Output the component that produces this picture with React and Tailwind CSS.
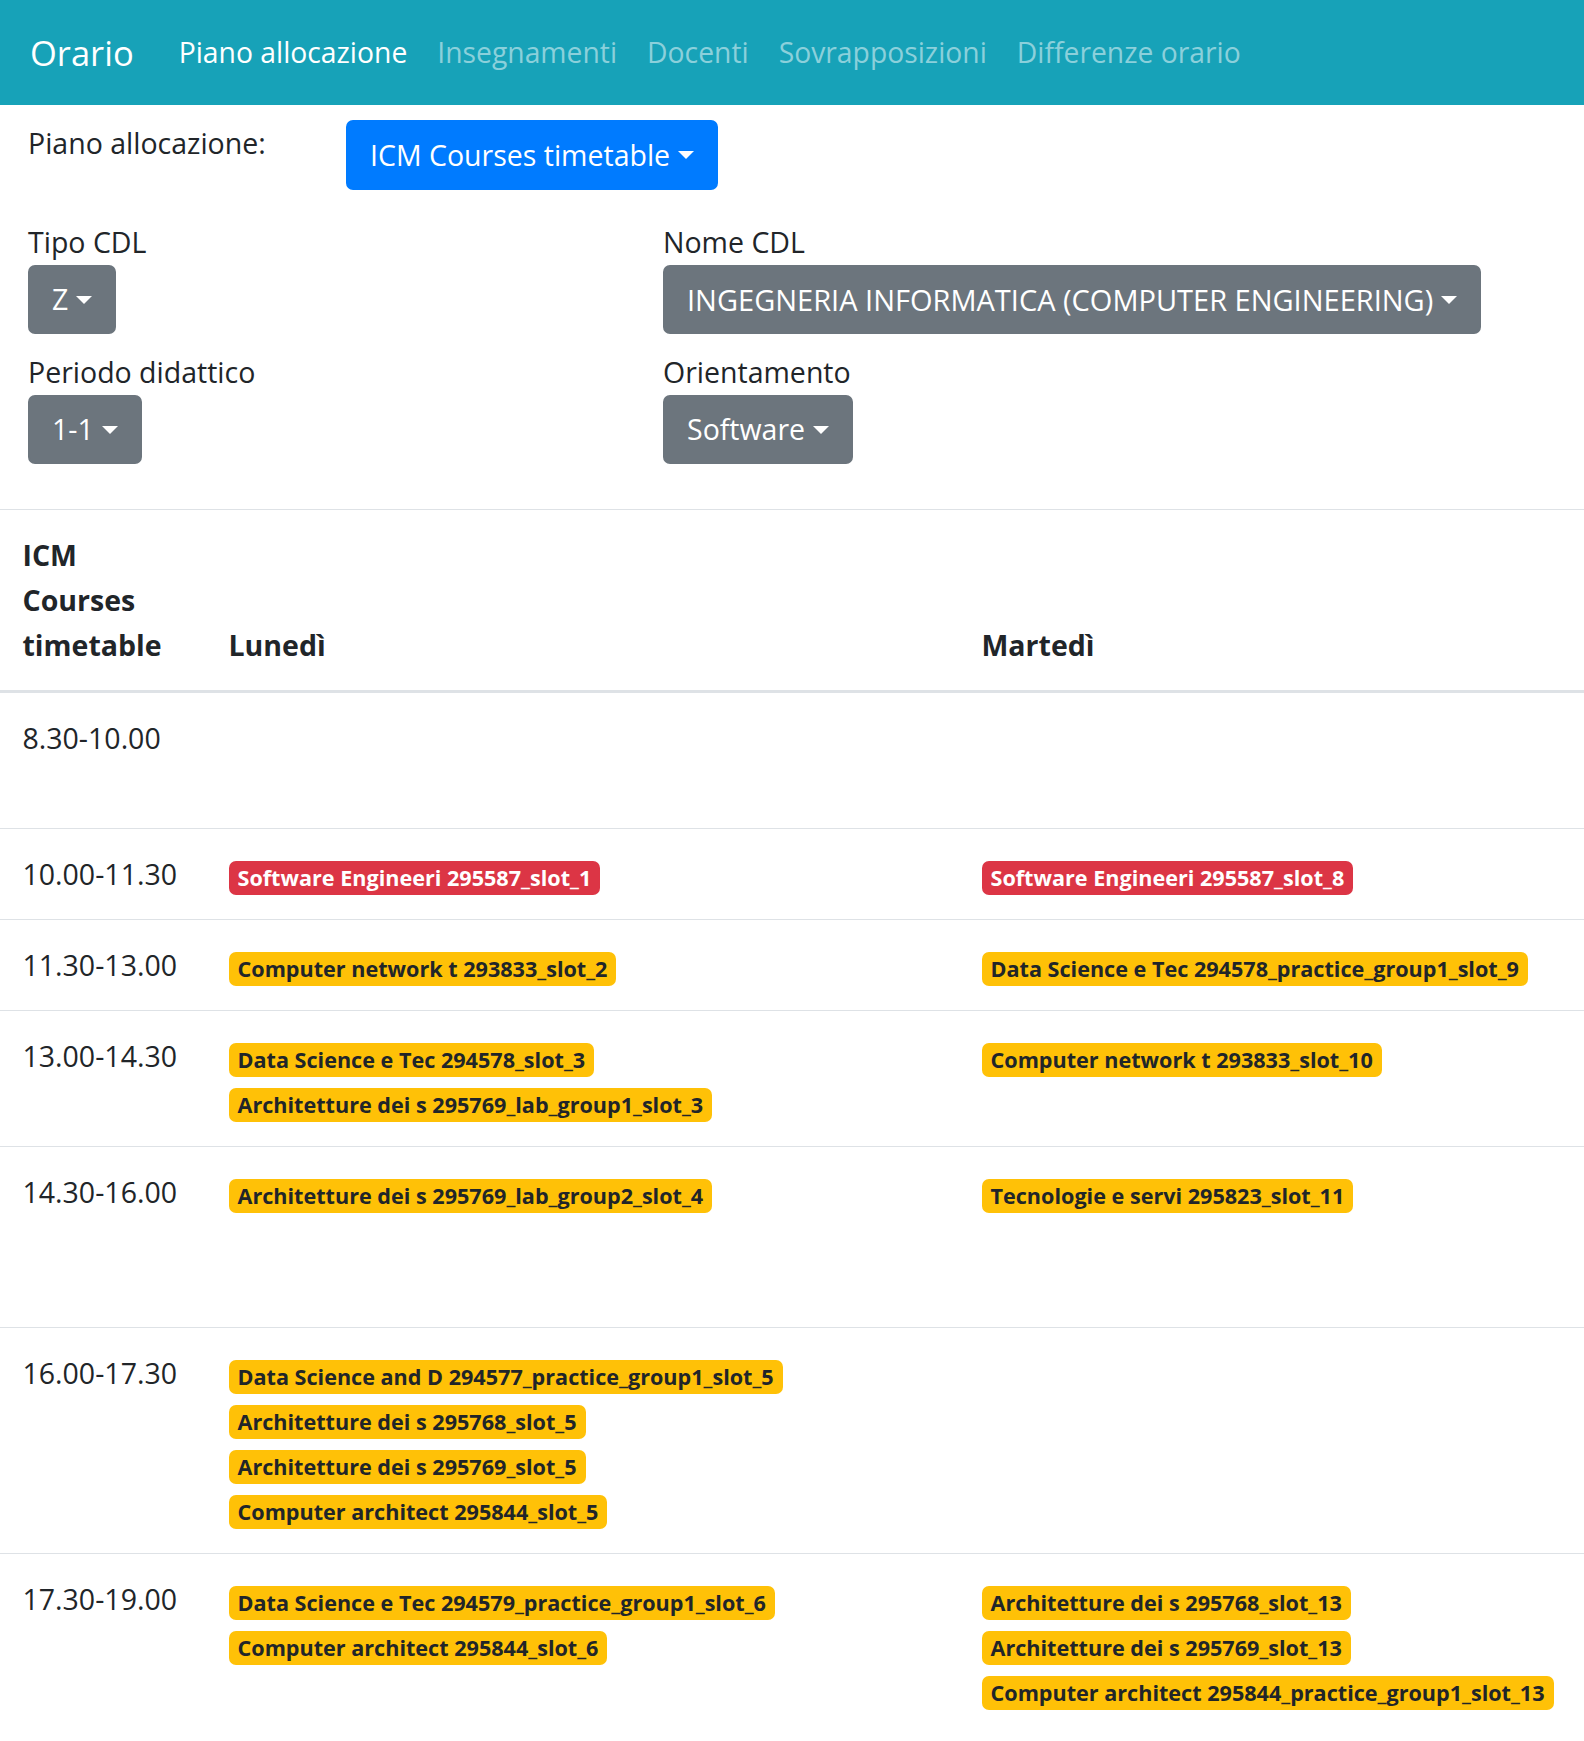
import React from "react";

const FONT = { fontFamily: '"Open Sans", "Noto Sans", Arial, sans-serif' };

function Caret() {
  return (
    <span className="inline-block ml-[8px] w-0 h-0 border-t-[8px] border-x-[8px] border-x-transparent border-t-white align-[6px]" />
  );
}

function DropBtn({ children, primary, wide }) {
  return (
    <button
      className={
        (primary ? "bg-[#007bff] border-[#007bff] h-[70px]" : "bg-[#6c757d] border-[#6c757d] h-[69px]") +
        (wide ? " text-[29px]" : " text-[28.5px]") +
        " inline-flex items-center whitespace-nowrap rounded-[7px] border-2 px-[22px] leading-[45px] text-white"
      }
    >
      <span>{children}</span>
      <Caret />
    </button>
  );
}

function Badge({ text, red }) {
  return (
    <div className="flex h-[45px] items-start pt-[9px]">
      <span
        className={
          (red ? "bg-[#dc3545] text-white" : "bg-[#ffc107] text-[#212529]") +
          " inline-block h-[34px] whitespace-nowrap rounded-[7px] px-[9px] text-[21.6px] font-bold leading-[34px]"
        }
      >
        {text}
      </span>
    </div>
  );
}

const MINH = {
  1: "min-h-[45px]",
  2: "min-h-[90px]",
  3: "min-h-[135px]",
  4: "min-h-[180px]",
};

const rows = [
  { time: "8.30-10.00", lines: 2, mon: [], tue: [] },
  {
    time: "10.00-11.30",
    lines: 1,
    mon: [{ t: "Software Engineeri 295587_slot_1", red: true }],
    tue: [{ t: "Software Engineeri 295587_slot_8", red: true }],
  },
  {
    time: "11.30-13.00",
    lines: 1,
    mon: [{ t: "Computer network t 293833_slot_2" }],
    tue: [{ t: "Data Science e Tec 294578_practice_group1_slot_9" }],
  },
  {
    time: "13.00-14.30",
    lines: 2,
    mon: [
      { t: "Data Science e Tec 294578_slot_3" },
      { t: "Architetture dei s 295769_lab_group1_slot_3" },
    ],
    tue: [{ t: "Computer network t 293833_slot_10" }],
  },
  {
    time: "14.30-16.00",
    lines: 3,
    mon: [{ t: "Architetture dei s 295769_lab_group2_slot_4" }],
    tue: [{ t: "Tecnologie e servi 295823_slot_11" }],
  },
  {
    time: "16.00-17.30",
    lines: 4,
    mon: [
      { t: "Data Science and D 294577_practice_group1_slot_5" },
      { t: "Architetture dei s 295768_slot_5" },
      { t: "Architetture dei s 295769_slot_5" },
      { t: "Computer architect 295844_slot_5" },
    ],
    tue: [],
  },
  {
    time: "17.30-19.00",
    lines: 3,
    mon: [
      { t: "Data Science e Tec 294579_practice_group1_slot_6" },
      { t: "Computer architect 295844_slot_6" },
    ],
    tue: [
      { t: "Architetture dei s 295768_slot_13" },
      { t: "Architetture dei s 295769_slot_13" },
      { t: "Computer architect 295844_practice_group1_slot_13" },
    ],
  },
];

export default function App() {
  return (
    <div className="min-h-screen w-full overflow-hidden bg-white text-[#212529]" style={FONT}>
      <nav className="flex h-[105px] items-center bg-[#17a2b8] px-[30px]">
        <span className="mr-[30px] text-[34.5px] leading-[52px] text-white">Orario</span>
        <span className="px-[15px] text-[28.3px] leading-[45px] text-white">Piano allocazione</span>
        <span className="px-[15px] text-[28.3px] leading-[45px] text-[#8bd0db]">Insegnamenti</span>
        <span className="px-[15px] text-[28.3px] leading-[45px] text-[#8bd0db]">Docenti</span>
        <span className="px-[15px] text-[28.3px] leading-[45px] text-[#8bd0db]">Sovrapposizioni</span>
        <span className="px-[15px] text-[28.3px] leading-[45px] text-[#8bd0db]">Differenze orario</span>
      </nav>

      <div className="px-[28px] pt-[15px]">
        <div className="flex items-start">
          <div className="w-[318px] text-[28.5px] leading-[46px]">Piano allocazione:</div>
          <DropBtn primary>ICM Courses timetable</DropBtn>
        </div>

        <div className="mt-[29px] grid grid-cols-[635px_1fr]">
          <div className="flex flex-col items-start">
            <div className="text-[28.5px] leading-[46px]">Tipo CDL</div>
            <DropBtn>Z</DropBtn>
            <div className="mt-[15px] text-[28.5px] leading-[46px]">Periodo didattico</div>
            <DropBtn>1-1</DropBtn>
          </div>
          <div className="flex flex-col items-start">
            <div className="text-[28.5px] leading-[46px]">Nome CDL</div>
            <DropBtn wide>INGEGNERIA INFORMATICA (COMPUTER ENGINEERING)</DropBtn>
            <div className="mt-[15px] text-[28.5px] leading-[46px]">Orientamento</div>
            <DropBtn>Software</DropBtn>
          </div>
        </div>
      </div>

      <table className="mt-[45px] w-full table-fixed border-collapse">
        <colgroup>
          <col className="w-[206px]" />
          <col className="w-[753px]" />
          <col />
        </colgroup>
        <thead>
          <tr>
            <th className="border-t border-b-[3px] border-[#dee2e6] p-[22.5px] text-left align-bottom text-[28.5px] font-bold leading-[45px]">
              <div>ICM</div>
              <div>Courses</div>
              <div>timetable</div>
            </th>
            <th className="border-t border-b-[3px] border-[#dee2e6] p-[22.5px] text-left align-bottom text-[28.5px] font-bold leading-[45px]">
              Lunedì
            </th>
            <th className="border-t border-b-[3px] border-[#dee2e6] p-[22.5px] text-left align-bottom text-[28.5px] font-bold leading-[45px]">
              Martedì
            </th>
          </tr>
        </thead>
        <tbody>
          {rows.map((r) => (
            <tr key={r.time}>
              <td className="border-t border-[#dee2e6] p-[22.5px] align-top">
                <div className={MINH[r.lines] + " whitespace-nowrap text-[28.5px] leading-[45px]"}>{r.time}</div>
              </td>
              <td className="border-t border-[#dee2e6] p-[22.5px] align-top">
                {r.mon.map((b) => (
                  <Badge key={b.t} text={b.t} red={b.red} />
                ))}
              </td>
              <td className="border-t border-[#dee2e6] p-[22.5px] align-top">
                {r.tue.map((b) => (
                  <Badge key={b.t} text={b.t} red={b.red} />
                ))}
              </td>
            </tr>
          ))}
        </tbody>
      </table>
    </div>
  );
}
